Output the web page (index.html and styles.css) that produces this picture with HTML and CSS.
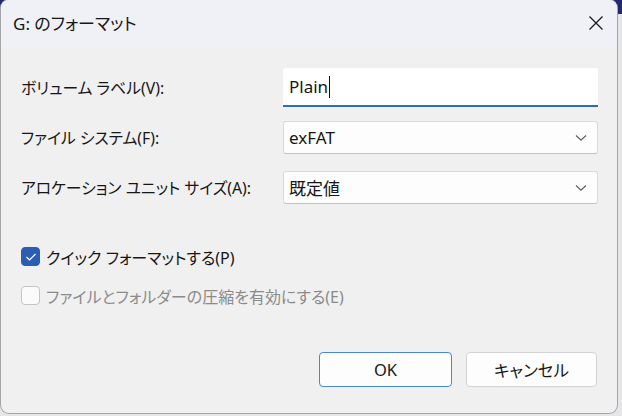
FILE: index.html
```html
<!DOCTYPE html>
<html lang="ja">
<head>
<meta charset="utf-8">
<title>G: のフォーマット</title>
<link rel="stylesheet" href="styles.css">
</head>
<body>
<div class="window">
  <div class="titlebar">
    <span class="title">G: のフォーマット</span>
    <svg class="close" width="16" height="16" viewBox="0 0 16 16"><path d="M1.5 1.5 L14.5 14.5 M14.5 1.5 L1.5 14.5" stroke="#1b1b1b" stroke-width="1.3" fill="none"/></svg>
  </div>
  <div class="content">
    <div class="form">
      <div class="row row-input">
        <span class="label">ボリューム ラベル(V):</span>
        <div class="input"><span>Plain</span><span class="caret"></span></div>
      </div>
      <div class="row row-sel1">
        <span class="label">ファイル システム(F):</span>
        <div class="select"><span>exFAT</span><svg width="12" height="8" viewBox="0 0 12 8"><path d="M1 1.5 L6 6.2 L11 1.5" stroke="#5a5a5a" stroke-width="1.1" fill="none"/></svg></div>
      </div>
      <div class="row row-sel2">
        <span class="label">アロケーション ユニット サイズ(A):</span>
        <div class="select"><span>既定値</span><svg width="12" height="8" viewBox="0 0 12 8"><path d="M1 1.5 L6 6.2 L11 1.5" stroke="#5a5a5a" stroke-width="1.1" fill="none"/></svg></div>
      </div>
    </div>
    <div class="checks">
      <div class="check">
        <span class="box checked"><svg width="12" height="10" viewBox="0 0 12 10"><path d="M1.5 5 L4.5 8 L10.5 2" stroke="#ffffff" stroke-width="1.2" fill="none"/></svg></span>
        <span>クイック フォーマットする(P)</span>
      </div>
      <div class="check disabled">
        <span class="box"></span>
        <span>ファイルとフォルダーの圧縮を有効にする(E)</span>
      </div>
    </div>
    <div class="buttons">
      <button class="btn primary">OK</button>
      <button class="btn">キャンセル</button>
    </div>
  </div>
</div>
</body>
</html>
```
FILE: styles.css
```css
html, body {
  margin: 0;
  padding: 0;
}
body {
  width: 622px;
  height: 416px;
  overflow: hidden;
  background: linear-gradient(#1f2a72 0, #1f2a72 14px, #e6e6e8 14px);
  font-family: "Noto Sans", "Noto Sans CJK JP", sans-serif;
  font-feature-settings: "palt";
  color: #161616;
}
.window {
  margin-left: 1px;
  width: 616px;
  height: 413px;
  background: #f0f0f0;
  border-radius: 8px;
  box-shadow: 0 0 0 1px #a6a6a6;
  overflow: hidden;
  display: flex;
  flex-direction: column;
}
.titlebar {
  height: 47px;
  flex: none;
  background: #eff1f7;
  display: flex;
  align-items: center;
  justify-content: space-between;
  padding: 0 12px 0 12px;
}
.title {
  font-size: 17px;
  margin-top: -2px;
}
.close {
  margin-right: 1px;
  margin-top: -2px;
}
.content {
  flex: 1;
  display: flex;
  flex-direction: column;
  padding: 0 19px 0 20px;
}
.form {
  display: flex;
  flex-direction: column;
  margin-top: 21px;
}
.row {
  display: grid;
  grid-template-columns: 262px 315px;
  align-items: center;
}
.row-sel1 { margin-top: 14px; }
.row-sel2 { margin-top: 17px; }
.label {
  font-size: 15.8px;
}
.input {
  height: 37px;
  background: #ffffff;
  border-bottom: 2px solid #2f69c3;
  border-radius: 3px 3px 0 0;
  display: flex;
  align-items: center;
  padding-left: 6px;
  font-size: 17px;
}
.caret {
  width: 1px;
  height: 22px;
  background: #111;
  margin-left: 1px;
}
.select {
  height: 31px;
  background: #fdfdfd;
  border: 1px solid #dadada;
  border-bottom-color: #c2c2c2;
  border-radius: 3px;
  display: flex;
  align-items: center;
  justify-content: space-between;
  padding: 0 10px 0 5px;
  font-size: 17px;
}
.checks {
  display: flex;
  flex-direction: column;
  gap: 20px;
  margin-top: 43px;
}
.check {
  display: flex;
  align-items: center;
  gap: 6px;
  font-size: 16px;
  height: 19px;
}
.box {
  width: 17px;
  height: 17px;
  border: 1px solid #c4c4c4;
  background: #fbfbfb;
  border-radius: 4px;
  display: flex;
  align-items: center;
  justify-content: center;
}
.box.checked {
  background: #2a5db3;
  border-color: #2a5db3;
}
.check.disabled {
  color: #8b8b8b;
}
.buttons {
  display: flex;
  justify-content: flex-end;
  gap: 14px;
  margin-top: 47px;
  padding-right: 1px;
}
.btn {
  width: 131px;
  height: 35px;
  background: #fdfdfd;
  border: 1px solid #d3d3d3;
  border-radius: 4px;
  font-family: "Noto Sans", "Noto Sans CJK JP", sans-serif;
  font-feature-settings: "palt";
  font-size: 16.5px;
  color: #161616;
  padding: 0;
}
.btn.primary {
  width: 133px;
  border-color: #4b86d2;
}
```
